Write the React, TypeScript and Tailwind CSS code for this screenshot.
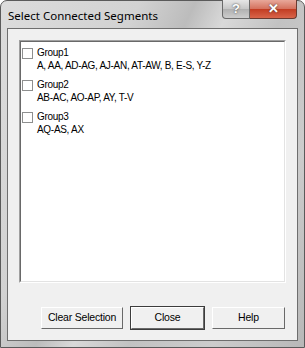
import React from "react";

type Group = { name: string; segments: string };

const groups: Group[] = [
  { name: "Group1", segments: "A, AA, AD-AG, AJ-AN, AT-AW, B, E-S, Y-Z" },
  { name: "Group2", segments: "AB-AC, AO-AP, AY, T-V" },
  { name: "Group3", segments: "AQ-AS, AX" },
];

function Win7Button({
  label,
  width,
  isDefault,
}: {
  label: string;
  width: string;
  isDefault?: boolean;
}) {
  return (
    <button
      className={
        width +
        " h-[24px] bg-[#f0f0f0] text-[10.5px] tracking-[-0.2px] text-black " +
        (isDefault ? "border border-[#3c3c3c]" : "border border-transparent")
      }
    >
      <span className="flex h-full w-full items-center justify-center border-t border-l border-t-white border-l-white border-b border-r border-b-[#696969] border-r-[#696969]">
        {label}
      </span>
    </button>
  );
}

export default function App() {
  return (
    <div
      className="w-[305px] h-[348px] flex flex-col rounded-t-[7px] border border-[#5a5a5a] bg-[linear-gradient(115deg,#dcdcdc_0%,#d2d2d2_30%,#bcbcbc_42%,#d9d9d9_50%,#c2c2c2_62%,#cccccc_80%,#b8b8b8_100%)]"
      style={{ fontFamily: '"Liberation Sans", Arial, sans-serif' }}
    >
      {/* Title bar */}
      <div className="h-[27px] flex items-start justify-between">
        <div
          className="pl-[7px] pt-[6px] text-[11.5px] text-black"
          style={{ fontFamily: '"Noto Sans", "Open Sans", sans-serif' }}
        >
          Select Connected Segments
        </div>
        <div className="flex mr-[7px] -mt-px">
          <div className="w-[28px] h-[19px] flex items-center justify-center rounded-bl-[4px] border border-[#6a6a6a] border-t-0 bg-[linear-gradient(#e6e6e6,#c6c6c6_50%,#b0b0b0_51%,#cdcdcd)] text-[13px] font-bold text-white [text-shadow:0_0_2px_#333]">
            ?
          </div>
          <div className="w-[47px] h-[19px] flex items-center justify-center rounded-br-[4px] border border-l-0 border-[#6a3a30] border-t-0 bg-[linear-gradient(#e8a89a,#d4705c_50%,#c23c22_51%,#d9654a)] text-[13px] font-bold text-white [text-shadow:0_0_2px_#333]">
            ✕
          </div>
        </div>
      </div>

      {/* Client area */}
      <div className="flex-1 mx-[6px] mb-[6px] border border-[#6e6e6e] bg-[#f0f0f0] flex flex-col px-[11px] pt-[11px]">
        <div className="h-[243px] border border-t-[#a0a0a0] border-l-[#a0a0a0] border-b-white border-r-white">
          <div className="h-full border border-t-[#696969] border-l-[#696969] border-b-[#e3e3e3] border-r-[#e3e3e3] bg-white pt-[4px] pl-[1px]">
            {groups.map((g) => (
              <div key={g.name} className="flex gap-[4px] h-[32px] text-[10px] leading-[13px] tracking-[-0.3px] text-black">
                <div className="mt-[2px] w-[11px] h-[11px] shrink-0 border border-[#8e8f8f] bg-white" />
                <div>
                  <div>{g.name}</div>
                  <div>{g.segments}</div>
                </div>
              </div>
            ))}
          </div>
        </div>
        <div className="flex justify-end gap-[6px] mt-[23px]">
          <Win7Button label="Clear Selection" width="w-[84px]" />
          <Win7Button label="Close" width="w-[75px]" isDefault />
          <Win7Button label="Help" width="w-[75px]" />
        </div>
      </div>
    </div>
  );
}
